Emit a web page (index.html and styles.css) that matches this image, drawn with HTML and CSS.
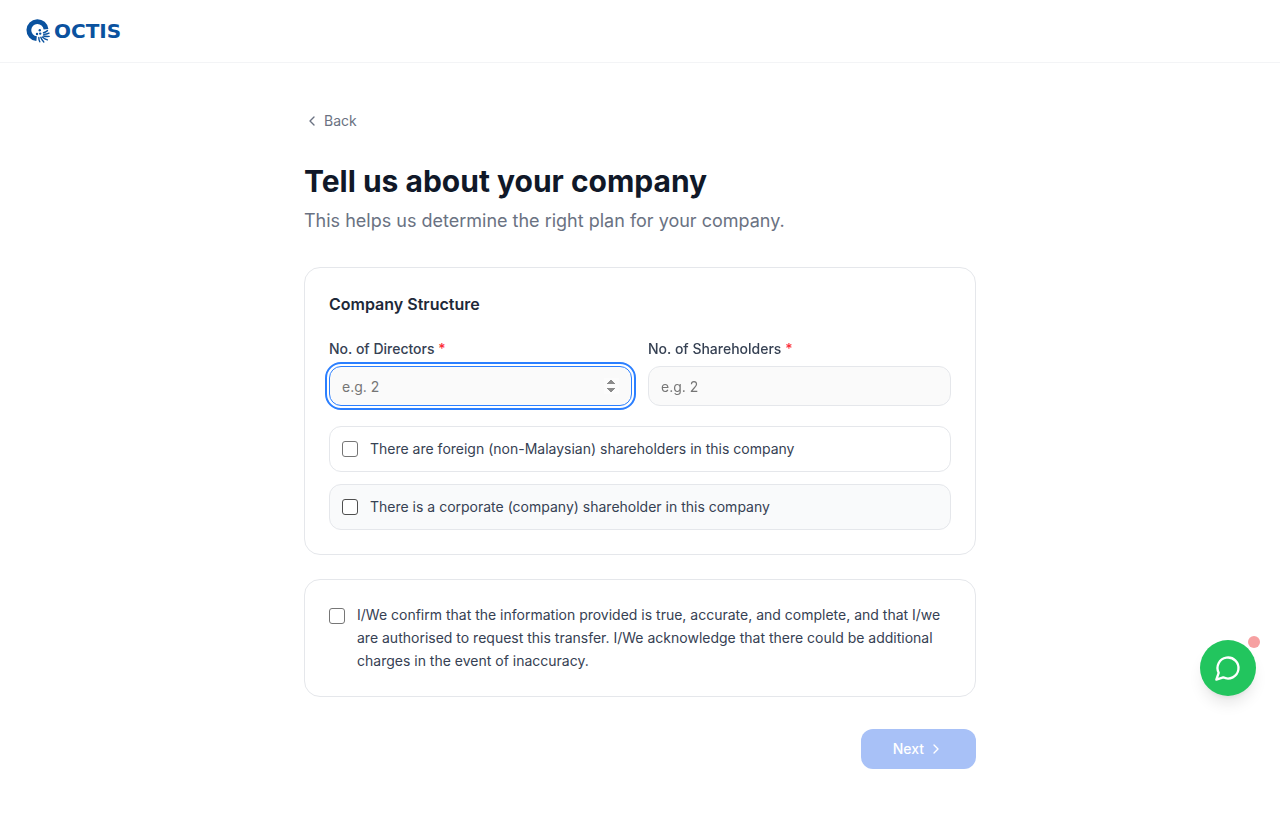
FILE: index.html
```html
<!DOCTYPE html>
<html lang="en">
<head>
    <meta charset="UTF-8">
    <meta name="viewport" content="width=device-width, initial-scale=1.0">
    <title>Tell us about your company</title>
    <link rel="stylesheet" href="styles.css">
</head>
<body>
    <header class="header">
        <a href="#" class="logo">
            <svg class="logo-mark" width="26" height="26" viewBox="0 0 26 26" fill="none" stroke="#0a529f" aria-hidden="true">
                <path d="M10.6 20.7A8.6 8.6 0 1 1 20 11.2" stroke-width="4.8"/>
                <g fill="#0a529f" stroke="none">
                    <circle cx="11" cy="16" r="1.2"/>
                    <circle cx="13.8" cy="12.2" r="1.2"/>
                    <circle cx="14.2" cy="15.6" r="1.2"/>
                </g>
                <g stroke-width="1.4" stroke-linecap="round">
                    <path d="M17.5 14.8c1.6-.4 2.800-1.200 4-2.200"/>
                    <path d="M17.800 16.400c2 0 3.700-.4 5.200-1.200"/>
                    <path d="M17.500 18c2 .5 3.700.6 5.700.4"/>
                    <path d="M16.400 19c1.600 1.400 3 2.300 5 2.900"/>
                    <path d="M14.800 19.300c.6 1.900 1.600 3.300 3 4.700"/>
                    <path d="M12.800 19.400c0 1.700.3 3 1 4.400"/>
                </g>
            </svg>
            <span>OCTIS</span>
        </a>
    </header>

    <main class="container">
        <button type="button" class="back-btn">
            <svg width="16" height="16" viewBox="0 0 24 24" fill="none" stroke="currentColor" stroke-width="2" stroke-linecap="round" stroke-linejoin="round" aria-hidden="true"><path d="m15 18-6-6 6-6"/></svg>
            Back
        </button>

        <h1>Tell us about your company</h1>
        <p class="subtitle">This helps us determine the right plan for your company.</p>

        <form>
            <section class="card">
                <h2>Company Structure</h2>
                <div class="fields">
                    <div class="field">
                        <label for="directors">No. of Directors <span class="required">*</span></label>
                        <input type="number" id="directors" class="focused" min="1" placeholder="e.g. 2" autofocus>
                    </div>
                    <div class="field">
                        <label for="shareholders">No. of Shareholders <span class="required">*</span></label>
                        <input type="number" id="shareholders" min="1" placeholder="e.g. 2">
                    </div>
                </div>
                <div class="options">
                    <label class="option">
                        <input type="checkbox" name="foreign">
                        There are foreign (non-Malaysian) shareholders in this company
                    </label>
                    <label class="option active">
                        <input type="checkbox" name="corporate">
                        There is a corporate (company) shareholder in this company
                    </label>
                </div>
            </section>

            <section class="card card-confirm">
                <label class="confirm">
                    <input type="checkbox" name="confirm">
                    <span>I/We confirm that the information provided is true, accurate, and complete, and that I/we are authorised to request this transfer. I/We acknowledge that there could be additional charges in the event of inaccuracy.</span>
                </label>
            </section>

            <div class="actions">
                <button type="submit" class="next-btn" disabled>
                    Next
                    <svg width="16" height="16" viewBox="0 0 24 24" fill="none" stroke="currentColor" stroke-width="2" stroke-linecap="round" stroke-linejoin="round" aria-hidden="true"><path d="m9 18 6-6-6-6"/></svg>
                </button>
            </div>
        </form>
    </main>

    <button type="button" class="chat-btn" aria-label="Chat">
        <svg width="28" height="28" viewBox="0 0 24 24" fill="none" stroke="currentColor" stroke-width="2" stroke-linecap="round" stroke-linejoin="round" aria-hidden="true"><path d="M7.9 20A9 9 0 1 0 4 16.1L2 22Z"/></svg>
        <span class="chat-dot"></span>
    </button>
</body>
</html>
```

FILE: styles.css
```css
* {
    box-sizing: border-box;
}
body {
    margin: 0;
    font-family: Inter, "Liberation Sans", sans-serif;
    font-size: 14px;
    line-height: 20px;
    color: #364153;
    background: #fff;
}
h1, h2, p {
    margin: 0;
}
button, input {
    font: inherit;
}
button {
    border: none;
    cursor: pointer;
}

/* header */
.header {
    display: flex;
    align-items: center;
    height: 63px;
    padding: 0 26px;
    border-bottom: 1px solid #f3f4f6;
}
.logo {
    display: flex;
    align-items: center;
    gap: 2px;
    color: #0a529f;
    font-family: "DejaVu Sans", sans-serif;
    font-size: 20px;
    font-weight: 700;
    text-decoration: none;
}

/* page */
.container {
    max-width: 720px;
    margin: 0 auto;
    padding: 48px 24px;
}
.back-btn {
    display: flex;
    align-items: center;
    gap: 4px;
    margin-bottom: 32px;
    padding: 0;
    color: #6a7282;
    background: none;
}
h1 {
    margin-bottom: 8px;
    color: #101828;
    font-size: 30px;
    line-height: 36px;
    font-weight: 700;
}
.subtitle {
    margin-bottom: 32px;
    color: #6a7282;
    font-size: 18px;
    line-height: 28px;
}
.card {
    margin-bottom: 24px;
    padding: 24px;
    border: 1px solid #e5e7eb;
    border-radius: 16px;
}
.card-confirm {
    padding-top: 23px;
}
h2 {
    margin-bottom: 20px;
    color: #1e2939;
    font-size: 16px;
    line-height: 24px;
    font-weight: 600;
}

/* fields */
.fields {
    display: grid;
    grid-template-columns: 1fr 1fr;
    gap: 16px;
    margin-bottom: 20px;
}
.field label {
    display: block;
    margin-bottom: 4px;
    line-height: 26px;
    font-weight: 500;
}
.required {
    color: #fb2c36;
}
.field input {
    display: block;
    width: 100%;
    height: 40px;
    padding: 0 12px;
    background: #fafafa;
    border: 1px solid #e5e7eb;
    border-radius: 12px;
}
.field input::placeholder {
    color: #757575;
}
.field input.focused {
    border-color: #2b7fff;
    outline: 2px solid #2b7fff;
    outline-offset: 2px;
}
.field input.focused::-webkit-inner-spin-button {
    opacity: 1;
}

/* checkboxes */
input[type="checkbox"] {
    appearance: none;
    flex-shrink: 0;
    width: 16px;
    height: 16px;
    margin: 0;
    background: #fff;
    border: 1px solid #767676;
    border-radius: 3px;
}
input[type="checkbox"]:checked {
    background: #2563eb;
}
.options {
    display: grid;
    gap: 12px;
}
.option {
    display: flex;
    align-items: center;
    gap: 12px;
    padding: 12px;
    border: 1px solid #e5e7eb;
    border-radius: 12px;
}
.option:hover, .option.active {
    background: #f9fafb;
}
.option.active input {
    border-color: #4f4f4f;
}
.confirm {
    display: flex;
    gap: 12px;
    line-height: 23px;
}
.confirm input {
    margin-top: 5px;
}

/* actions */
.actions {
    display: flex;
    justify-content: flex-end;
    margin-top: 32px;
}
.next-btn {
    display: flex;
    align-items: center;
    gap: 4px;
    height: 40px;
    padding: 0 32px;
    color: #fff;
    font-weight: 500;
    background: #a8c1f7;
    border-radius: 12px;
}
.chat-btn {
    position: fixed;
    right: 24px;
    bottom: 121px;
    display: flex;
    align-items: center;
    justify-content: center;
    width: 56px;
    height: 56px;
    padding: 0;
    color: #fff;
    background: #22c55e;
    border-radius: 50%;
    box-shadow: 0 10px 15px -3px rgba(0, 0, 0, 0.1), 0 4px 6px -4px rgba(0, 0, 0, 0.1);
}
.chat-dot {
    position: absolute;
    top: -4px;
    right: -4px;
    width: 12px;
    height: 12px;
    background: #f6a0a1;
    border-radius: 50%;
}
```
